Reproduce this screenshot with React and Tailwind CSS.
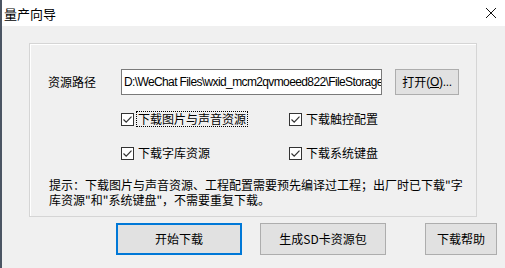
import React from "react";

const font = { fontFamily: '"Noto Sans CJK SC", "Microsoft YaHei", sans-serif' };
const latin = { fontFamily: '"Liberation Sans", "Noto Sans CJK SC", sans-serif' };

function Check({ label, focus }) {
  return (
    <div className="flex items-center h-[14px]">
      <div className="w-[13px] h-[13px] border border-[#333] bg-white flex items-center justify-center shrink-0">
        <svg width="11" height="11" viewBox="0 0 11 11">
          <path d="M1.5 5.5 L4.2 8.2 L9.5 2.6" fill="none" stroke="#333" strokeWidth="1.2" />
        </svg>
      </div>
      <span
        className={
          "ml-[3px] text-[12px] leading-[14px] text-black px-[1px] " +
          (focus ? "outline outline-1 outline-dotted outline-black" : "")
        }
      >
        {label}
      </span>
    </div>
  );
}

export default function App() {
  return (
    <div
      className="w-[505px] h-[268px] bg-[#f0f0f0] flex flex-col border-l-2 border-[#4b5563] overflow-hidden"
      style={font}
    >
      <div className="h-[26px] bg-white flex items-center justify-between shrink-0">
        <span className="ml-[2px] text-[13px] text-black leading-none">量产向导</span>
        <svg width="12" height="12" viewBox="0 0 12 12" className="mr-[8px]">
          <path d="M1 1 L11 11 M11 1 L1 11" stroke="#111" strokeWidth="1" />
        </svg>
      </div>
      <div className="flex-1 flex flex-col">
        <div className="ml-[27px] mt-[17px] w-[448px] h-[174px] border border-[#d5d5d5] shadow-[inset_1px_1px_0_#fff] flex flex-col">
          <div className="flex items-center mt-[25px]">
            <span className="ml-[18px] w-[73px] text-[12px] text-black">资源路径</span>
            <div className="w-[261px] h-[26px] bg-white border border-[#7a7a7a] flex items-center px-[2px] overflow-hidden whitespace-nowrap">
              <span className="text-[12px] tracking-[-0.62px] text-black" style={latin}>
                D:\WeChat Files\wxid_mcm2qvmoeed822\FileStorage
              </span>
            </div>
            <div className="ml-[13px] w-[64px] h-[26px] bg-[#e1e1e1] border border-[#adadad] flex items-center justify-center text-[12px] text-black whitespace-nowrap">
              打开<span style={latin} className="tracking-[-0.3px]">(<span className="underline">O</span>)...</span>
            </div>
          </div>
          <div className="grid grid-cols-[168px_auto] ml-[91px] mt-[17px] gap-y-[20px]">
            <Check label="下载图片与声音资源" focus />
            <Check label="下载触控配置" />
            <Check label="下载字库资源" />
            <Check label="下载系统键盘" />
          </div>
          <div className="ml-[19px] mt-[17px] text-[12px] text-black flex flex-col">
            <div className="h-[15px] leading-[15px] whitespace-nowrap">
              提示：下载图片与声音资源、工程配置需要预先编译过工程；出厂时已下载"字
            </div>
            <div className="h-[15px] leading-[15px] whitespace-nowrap">
              库资源"和"系统键盘"，不需要重复下载。
            </div>
          </div>
        </div>
        <div className="flex mt-[6px]">
          <div className="ml-[114px] w-[126px] h-[32px] bg-[#e1e1e1] border-2 border-[#0078d7] flex items-center justify-center text-[12px] text-black">
            开始下载
          </div>
          <div className="ml-[18px] w-[126px] h-[32px] bg-[#e1e1e1] border border-[#adadad] flex items-center justify-center text-[12px] text-black">
            生成SD卡资源包
          </div>
          <div className="ml-[39px] w-[72px] h-[32px] bg-[#e1e1e1] border border-[#adadad] flex items-center justify-center text-[12px] text-black">
            下载帮助
          </div>
        </div>
      </div>
    </div>
  );
}
